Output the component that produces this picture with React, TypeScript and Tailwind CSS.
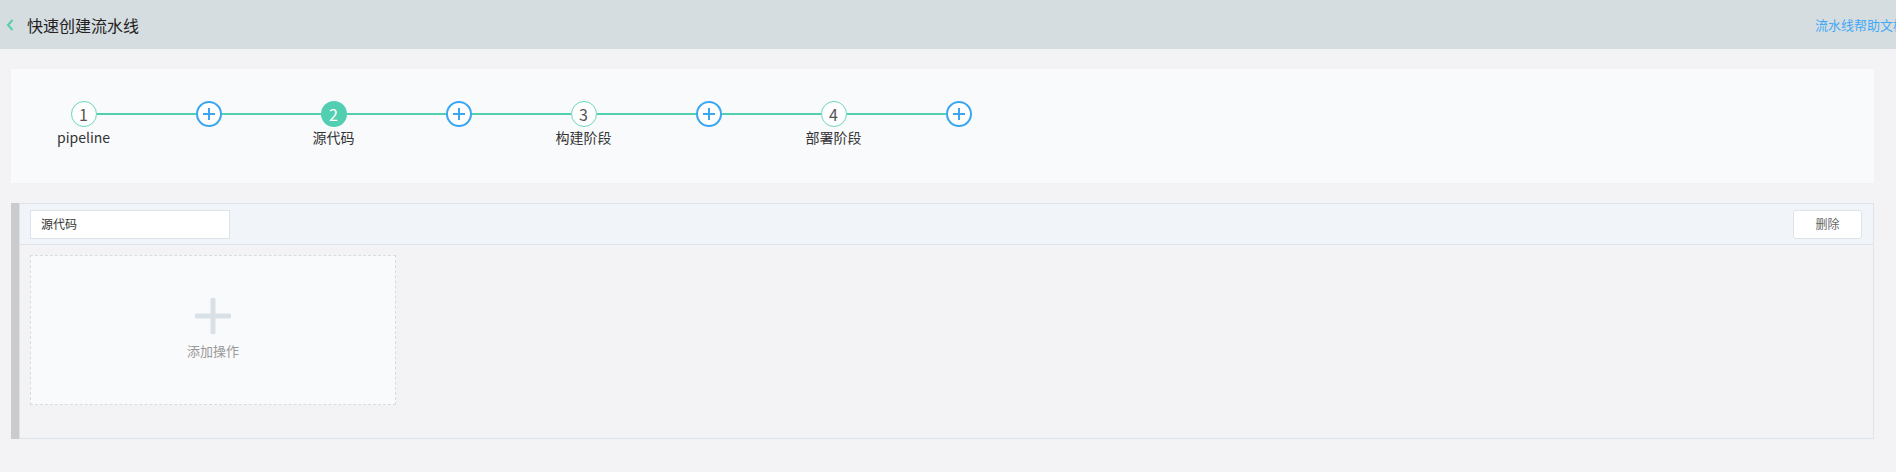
import React from 'react';

const font = { fontFamily: '"Noto Sans CJK SC", "Noto Sans", sans-serif' };

const steps = [
  { num: 1, label: 'pipeline', active: false },
  { num: 2, label: '源代码', active: true },
  { num: 3, label: '构建阶段', active: false },
  { num: 4, label: '部署阶段', active: false },
];

const Line = ({ show }: { show: boolean }) => (
  <div className={`h-[2px] flex-1 ${show ? 'bg-[#52cfb0]' : 'bg-transparent'}`}></div>
);

const PlusCircle = () => (
  <div className="w-[26px] h-[26px] rounded-full border-2 border-[#3aa6f2] bg-white flex items-center justify-center">
    <svg width="14" height="14" viewBox="0 0 14 14">
      <path d="M7 1v12M1 7h12" stroke="#3aa6f2" strokeWidth="2" />
    </svg>
  </div>
);

const App = () => {
  return (
    <div className="w-[1896px] h-[472px] bg-[#f3f3f5] overflow-hidden" style={font}>
      {/* header */}
      <div className="h-[49px] bg-[#d6dde0] flex items-center justify-between">
        <div className="flex items-center">
          <svg width="10" height="14" viewBox="0 0 10 14" className="ml-[5px]">
            <path d="M7.5 2 L3 7 L7.5 12" stroke="#52cfb0" strokeWidth="2" fill="none" />
          </svg>
          <span className="ml-[12px] text-[16px] font-normal text-[#222]">快速创建流水线</span>
        </div>
        <a className="text-[13px] text-[#3fa9f5] whitespace-nowrap mr-[-10px]">流水线帮助文档</a>
      </div>

      <div className="pl-[11px] pr-[22px]">
        {/* steps card */}
        <div className="mt-[20px] h-[114px] bg-[#f9fafc] pt-[32px] pl-[10px] flex">
          {steps.map((s, i) => (
            <React.Fragment key={s.num}>
              <div className="w-[125px] flex flex-col items-center">
                <div className="flex items-center w-full">
                  <Line show={i > 0} />
                  {s.active ? (
                    <div className="w-[26px] h-[26px] rounded-full bg-[#52cfb0] text-white text-[16px] flex items-center justify-center">
                      {s.num}
                    </div>
                  ) : (
                    <div className="w-[26px] h-[26px] rounded-full border border-[#6dd5bd] bg-white text-[#555] text-[16px] flex items-center justify-center">
                      {s.num}
                    </div>
                  )}
                  <Line show={true} />
                </div>
                <div className="text-[14px] leading-[20px] text-[#333]">{s.label}</div>
              </div>
              <div className="w-[125px] flex flex-col items-center">
                <div className="flex items-center w-full">
                  <Line show={true} />
                  <PlusCircle />
                  <Line show={i < steps.length - 1} />
                </div>
              </div>
            </React.Fragment>
          ))}
        </div>

        {/* stage panel */}
        <div className="mt-[20px] h-[236px] flex">
          <div className="w-[8px] bg-[#cbcbcb]"></div>
          <div className="flex-1 border border-[#dde3ea] flex flex-col">
            <div className="h-[41px] bg-[#f1f5f9] border-b border-[#dde3ea] flex items-center justify-between pl-[10px] pr-[11px]">
              <div className="w-[200px] h-[29px] bg-white border border-[#dde3ea] flex items-center pl-[10px] text-[12px] text-[#333]">
                源代码
              </div>
              <button className="w-[69px] h-[29px] bg-white border border-[#dde3ea] rounded-[3px] text-[12px] text-[#666]">
                删除
              </button>
            </div>
            <div className="pt-[10px] pl-[10px]">
              <div className="w-[366px] h-[150px] bg-[#f9fafc] border border-dashed border-[#d5dde4] flex flex-col items-center pt-[42px]">
                <svg width="36" height="36" viewBox="0 0 36 36">
                  <path d="M18 2v32M2 18h32" stroke="#d9e1e7" strokeWidth="5" strokeLinecap="round" />
                </svg>
                <div className="mt-[7px] text-[13px] text-[#999]">添加操作</div>
              </div>
            </div>
          </div>
        </div>
      </div>
    </div>
  );
};

export default App;
